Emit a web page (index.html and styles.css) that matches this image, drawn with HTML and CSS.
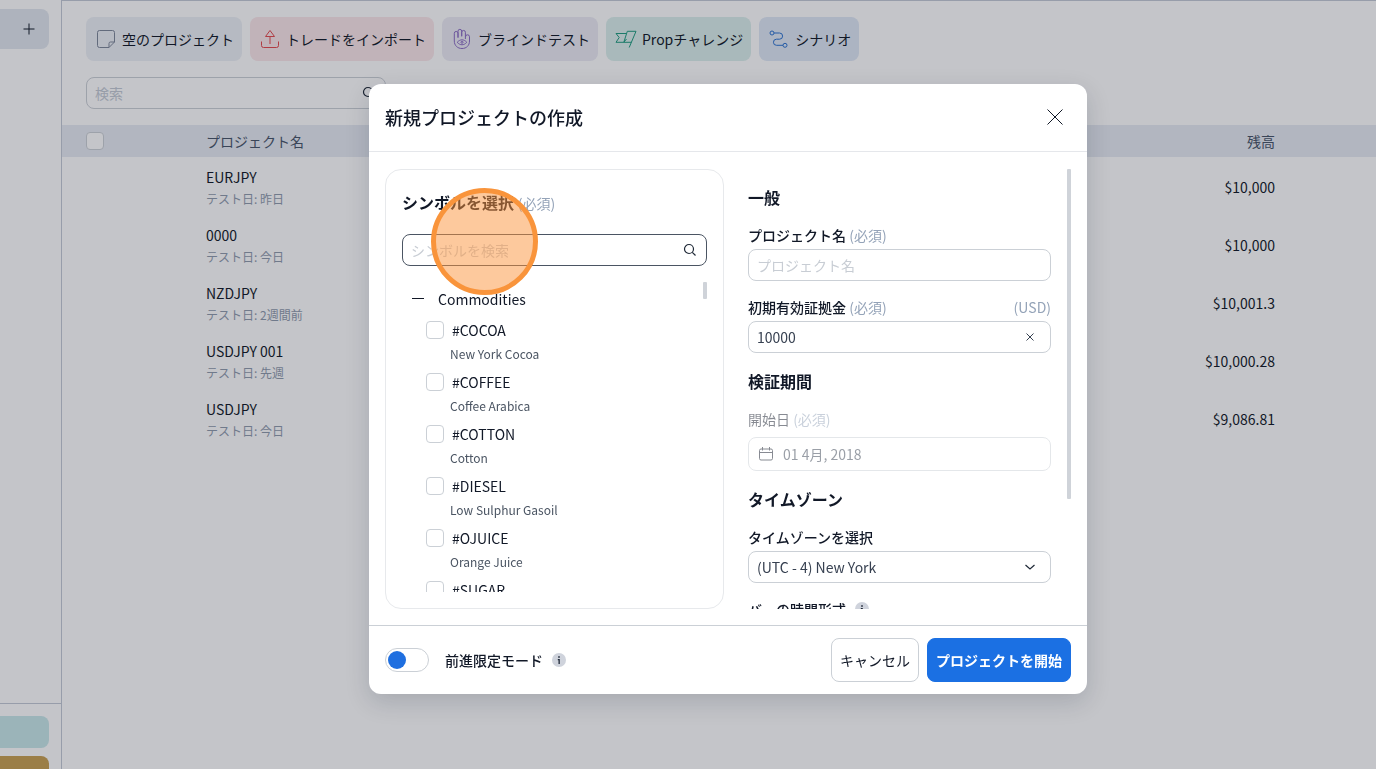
FILE: index.html
```html
<!DOCTYPE html>
<html lang="ja">
<head>
<meta charset="utf-8">
<meta name="viewport" content="width=device-width, initial-scale=1">
<title>新規プロジェクトの作成</title>
<link rel="stylesheet" href="styles.css">
</head>
<body>
<div class="app">
  <aside class="sidebar">
    <button class="sidebar-add" type="button" aria-label="追加">
      <svg width="12" height="12" viewBox="0 0 12 12"><path d="M6 .5v11M.5 6h11" stroke="currentColor" fill="none"/></svg>
    </button>
    <div class="sidebar-foot">
      <button class="foot-btn foot-teal" type="button" aria-label="サポート"></button>
      <button class="foot-btn foot-gold" type="button" aria-label="アップグレード"></button>
    </div>
  </aside>
  <main class="main">
    <div class="chips">
      <button class="chip chip-slate" type="button">
        <svg class="icon" viewBox="0 0 24 24"><path d="M5.500 3.500h13a2 2 0 0 1 2 2v9.500l-5.500 5.500h-9.500a2 2 0 0 1-2-2v-13a2 2 0 0 1 2-2zM20.500 15h-4a1.500 1.500 0 0 0-1.500 1.500v4"/></svg>空のプロジェクト</button>
      <button class="chip chip-red" type="button">
        <svg class="icon" viewBox="0 0 24 24"><path d="M3.500 14.500v4a2 2 0 0 0 2 2h13a2 2 0 0 0 2-2v-4M12 17V9.500M12 3.500l4.500 6h-9z"/></svg>トレードをインポート</button>
      <button class="chip chip-purple" type="button">
        <svg class="icon" viewBox="0 0 24 24"><path d="M8 11V4.200a1.800 1.800 0 0 1 3.700 0V9.500M11.700 9V5.300a1.800 1.800 0 0 1 3.700 0V12M8 10V6.300a1.800 1.800 0 0 0-3.700 0V14c0 4.500 3.200 7.500 7.700 7.500s7.500-3 7.500-7.500V9.800a1.800 1.800 0 0 0-4 0"/><path d="M7.200 15.300c3-3.300 6.600-3.300 9.600 0c-3 3.300-6.600 3.300-9.600 0z"/><circle cx="12" cy="15.300" r="1"/></svg>ブラインドテスト</button>
      <button class="chip chip-green" type="button">
        <svg class="icon" viewBox="0 0 24 24"><path d="M13.300 4.300H22l-6.800 16.200M13.300 4.300L9.800 15.300h7.600M12.500 6.500H2l3.200 4-3.200 4.800h7.800l2.700-3.300"/></svg>Propチャレンジ</button>
      <button class="chip chip-blue" type="button">
        <svg class="icon" viewBox="0 0 24 24"><circle cx="5" cy="6" r="2"/><circle cx="18" cy="18.300" r="2"/><path d="M7 6h5.500a3 3 0 0 1 0 6.200H9.500a3 3 0 0 0 0 6.100H16"/></svg>シナリオ</button>
    </div>
    <div class="field page-search">
      <input class="input" type="search" placeholder="検索" aria-label="検索">
      <svg class="glyph" viewBox="0 0 14 14"><circle cx="6" cy="6" r="4.500"/><path d="M9.300 9.300L12.500 12.500"/></svg>
    </div>
    <table class="projects">
      <thead>
        <tr><th class="col-check"><input class="check" type="checkbox" aria-label="すべて選択"></th><th class="col-name">プロジェクト名</th><th class="col-balance">残高</th></tr>
      </thead>
      <tbody>
        <tr><td></td><td class="col-name">EURJPY<small>テスト日: 昨日</small></td><td class="col-balance">$10,000</td></tr>
        <tr><td></td><td class="col-name">0000<small>テスト日: 今日</small></td><td class="col-balance">$10,000</td></tr>
        <tr><td></td><td class="col-name">NZDJPY<small>テスト日: 2週間前</small></td><td class="col-balance">$10,001.3</td></tr>
        <tr><td></td><td class="col-name">USDJPY 001<small>テスト日: 先週</small></td><td class="col-balance">$10,000.28</td></tr>
        <tr><td></td><td class="col-name">USDJPY<small>テスト日: 今日</small></td><td class="col-balance">$9,086.81</td></tr>
      </tbody>
    </table>
  </main>
</div>

<div class="overlay">
  <section class="modal" role="dialog" aria-modal="true" aria-labelledby="modal-title">
    <header class="modal-head">
      <h1 class="modal-title" id="modal-title">新規プロジェクトの作成</h1>
      <button class="close" type="button" aria-label="閉じる">
        <svg width="16" height="16" viewBox="0 0 16 16"><path d="M.5.500l15 15M15.500.500l-15 15" stroke="currentColor" fill="none"/></svg>
      </button>
    </header>

    <div class="modal-body">
      <div class="symbols">
        <h2 class="symbols-title"><label for="symbol-search">シンボルを選択</label> <span class="required">(必須)</span></h2>
        <div class="field field-focus">
          <input class="input" id="symbol-search" type="search" placeholder="シンボルを検索">
          <svg class="glyph" viewBox="0 0 14 14"><circle cx="6" cy="6" r="4.500"/><path d="M9.300 9.300L12.500 12.500"/></svg>
        </div>
        <div class="scroll symbols-scroll">
          <div class="scroll-view">
            <button class="group" type="button"><span class="minus"></span>Commodities</button>
            <ul class="symbol-list">
              <li class="symbol"><label class="symbol-name"><input class="check" type="checkbox">#COCOA</label><p class="symbol-sub">New York Cocoa</p></li>
              <li class="symbol"><label class="symbol-name"><input class="check" type="checkbox">#COFFEE</label><p class="symbol-sub">Coffee Arabica</p></li>
              <li class="symbol"><label class="symbol-name"><input class="check" type="checkbox">#COTTON</label><p class="symbol-sub">Cotton</p></li>
              <li class="symbol"><label class="symbol-name"><input class="check" type="checkbox">#DIESEL</label><p class="symbol-sub">Low Sulphur Gasoil</p></li>
              <li class="symbol"><label class="symbol-name"><input class="check" type="checkbox">#OJUICE</label><p class="symbol-sub">Orange Juice</p></li>
              <li class="symbol"><label class="symbol-name"><input class="check" type="checkbox">#SUGAR</label></li>
            </ul>
          </div>
          <span class="thumb thumb-short"></span>
        </div>
        <span class="pointer"></span>
      </div>

      <div class="scroll settings">
        <form class="scroll-view settings-form">
          <h2 class="section-title">一般</h2>
          <div class="row"><label class="label" for="name">プロジェクト名 <span class="required">(必須)</span></label></div>
          <div class="field"><input class="input" id="name" type="text" placeholder="プロジェクト名"></div>
          <div class="row row-next"><label class="label" for="equity">初期有効証拠金 <span class="required">(必須)</span></label><span class="required">(USD)</span></div>
          <div class="field">
            <input class="input" id="equity" type="text" value="10000">
            <button class="clear" type="button" aria-label="クリア"><svg class="glyph-box" viewBox="0 0 14 14"><path d="M3.500 3.500l7 7M10.500 3.500l-7 7"/></svg></button>
          </div>
          <h2 class="section-title section-next">検証期間</h2>
          <div class="disabled">
            <div class="row"><label class="label label-light" for="start">開始日 <span class="required">(必須)</span></label></div>
            <div class="field field-date">
              <svg class="calendar" viewBox="0 0 16 16"><path d="M3 3h10a1.500 1.500 0 0 1 1.500 1.500v8A1.500 1.500 0 0 1 13 14H3a1.500 1.500 0 0 1-1.500-1.500v-8A1.500 1.500 0 0 1 3 3zM1.500 6.500h13M4.500 1v3.500M11.500 1v3.500"/></svg>
              <input class="input" id="start" type="text" value="01 4月, 2018" disabled>
            </div>
          </div>
          <h2 class="section-title section-next">タイムゾーン</h2>
          <div class="row"><label class="label" for="tz">タイムゾーンを選択</label></div>
          <div class="field">
            <select class="input" id="tz"><option>(UTC - 4) New York</option></select>
            <svg class="glyph glyph-inset" viewBox="0 0 14 14"><path d="M2.500 5L7 9l4.500-4"/></svg>
          </div>
          <div class="row row-next row-info"><span class="label">バーの時間形式</span>
            <svg class="info" viewBox="0 0 14 14"><circle class="info-bg" cx="7" cy="7" r="7"/><path d="M6.200 3.200h1.600v1.600h-1.600zM5.800 6h2v5h-1.300v-3.800h-.7z"/></svg></div>
        </form>
        <span class="thumb thumb-long"></span>
      </div>
    </div>

    <footer class="modal-foot">
      <input class="toggle" id="forward" type="checkbox">
      <label class="label" for="forward">前進限定モード</label>
      <svg class="info info-foot" viewBox="0 0 14 14"><circle class="info-bg" cx="7" cy="7" r="7"/><path d="M6.200 3.200h1.600v1.600h-1.600zM5.800 6h2v5h-1.300v-3.800h-.7z"/></svg>
      <button class="btn" type="button">キャンセル</button>
      <button class="btn btn-primary" type="button">プロジェクトを開始</button>
    </footer>
  </section>
</div>
</body>
</html>
```

FILE: styles.css
```css
* { box-sizing: border-box; }

body {
  margin: 0;
  font: 14px/24px "Noto Sans CJK JP", "Noto Sans", sans-serif;
  color: #111827;
  background: #fff;
}

button, input, select { font: inherit; color: inherit; }
button { margin: 0; border: 0; background: none; cursor: pointer; }
h1, h2, p, ul { margin: 0; padding: 0; }
ul { list-style: none; }
svg { display: block; flex: none; fill: none; stroke: currentColor; }

/* Page behind the dialog */
.app { display: flex; height: 100vh; overflow: hidden; }

.sidebar {
  flex: 0 0 62px;
  display: flex;
  flex-direction: column;
  justify-content: space-between;
  padding-top: 9px;
  border-right: 1px solid #c3cad6;
}
.sidebar-add {
  display: flex;
  align-items: center;
  justify-content: flex-end;
  width: 49px;
  height: 40px;
  padding: 0 14px 0 0;
  border-radius: 0 8px 8px 0;
  background: #e2e7ef;
}
.sidebar-foot {
  display: flex;
  flex-direction: column;
  gap: 8px;
  height: 66px;
  padding-top: 12px;
  border-top: 1px solid #c3cad6;
  overflow: hidden;
}
.foot-btn { flex: 0 0 32px; width: 49px; padding: 0; border-radius: 0 8px 8px 0; }
.foot-teal { background: #c9e8ea; }
.foot-gold { background: #c8a052; }

.main { flex: 1; min-width: 0; border-top: 1px solid #c3cad6; padding-top: 16px; }

.chips { display: flex; gap: 8px; padding: 0 24px; }
.chip {
  display: flex;
  align-items: center;
  gap: 4px;
  height: 44px;
  padding: 0 8px;
  border-radius: 8px;
  white-space: nowrap;
}
.icon { width: 24px; height: 24px; stroke-width: 1; }
.chip-slate { background: #edf0f6; }
.chip-slate .icon { color: #7c8799; }
.chip-red { background: #fbe7ea; }
.chip-red .icon { color: #e5484d; }
.chip-purple { background: #ecebf5; }
.chip-purple .icon { color: #8b6cc4; }
.chip-green { background: #dbefec; }
.chip-green .icon { color: #1f9d80; }
.chip-blue { background: #dfe8f6; }
.chip-blue .icon { color: #2b72d0; }

.field {
  display: flex;
  align-items: center;
  height: 32px;
  padding: 0 8px;
  border: 1px solid #cbd0d6;
  border-radius: 8px;
  background: #fff;
}
.input {
  flex: 1;
  min-width: 0;
  height: 28px;
  padding: 0;
  border: 0;
  outline: 0;
  background: none;
  color: #374151;
  appearance: none;
}
.input::placeholder { color: #c8cdd4; opacity: 1; }
.glyph, .glyph-box { width: 14px; height: 14px; color: #1f2937; stroke-width: 1.200; }
.glyph { margin-right: 1px; }
.glyph-inset { margin-right: 5px; }

.page-search { width: 300px; margin: 16px 24px; }
.page-search .input::placeholder { color: #c3cad4; }

.check {
  appearance: none;
  flex: none;
  display: block;
  width: 18px;
  height: 18px;
  margin: 0;
  border: 1px solid #cbd0d6;
  border-radius: 4px;
  background: #fff;
}

.projects { width: 100%; border-collapse: collapse; }
.projects th { height: 32px; padding: 0; font-weight: 400; color: #475569; background: #e7ebf3; text-align: left; }
.projects td { height: 58px; padding: 2px 0 0; }
.projects .col-check { width: 144px; padding-left: 24px; }
.projects .col-balance { padding-right: 101px; text-align: right; }
.projects small { display: block; font-size: 12px; line-height: 20px; color: #8f9bad; }

/* Dialog */
.overlay {
  position: fixed;
  inset: 0;
  display: flex;
  align-items: center;
  justify-content: center;
  padding: 9px 0 0 80px;
  background: rgba(18, 24, 38, .25);
}
.modal {
  display: flex;
  flex-direction: column;
  width: 718px;
  max-width: 100%;
  height: calc(100vh - 159px);
  border-radius: 12px;
  background: #fff;
  box-shadow: 0 8px 24px rgba(15, 23, 42, .16);
}
.modal-head {
  display: flex;
  align-items: center;
  justify-content: space-between;
  height: 68px;
  padding: 0 24px 2px 16px;
  border-bottom: 1px solid #e5e7eb;
}
.modal-title { font-size: 18px; font-weight: 500; line-height: 28px; }
.close { display: flex; padding: 0; }

.modal-body {
  flex: 1;
  min-height: 0;
  display: grid;
  grid-template-columns: 1fr 1fr;
  gap: 8px;
  padding: 17px 16px 16px;
}
.symbols {
  position: relative;
  display: flex;
  flex-direction: column;
  min-height: 0;
  padding: 16px;
  border: 1px solid #e7e9ec;
  border-radius: 16px;
}
.symbols-title { margin-bottom: 16px; font-size: 16px; line-height: 32px; font-weight: 700; }
.symbols-title .required { line-height: 24px; }
.required { font-size: 14px; font-weight: 400; color: #94a3b8; }
.field-focus { flex: none; border-color: #4b5563; }

.scroll { display: flex; min-height: 0; }
.scroll-view { flex: 1; min-width: 0; overflow: hidden; }
.symbols-scroll { flex: 1; margin-top: 16px; }
.thumb { flex: none; width: 4px; border-radius: 1px; background: #cfd3d9; }
.thumb-short { height: 17px; }
.thumb-long { height: 75%; }

.group { display: flex; align-items: center; gap: 14px; height: 33px; padding: 0 10px; }
.minus { width: 12px; height: 1px; background: #111827; }
.symbol-list { padding-left: 24px; }
.symbol { height: 52px; }
.symbol-name { display: flex; align-items: center; gap: 8px; height: 30px; }
.symbol-sub { padding-left: 24px; font-size: 12px; line-height: 18px; color: #4b5563; }

/* Click highlight */
.pointer {
  position: absolute;
  left: 45px;
  top: 18px;
  width: 107px;
  height: 107px;
  border: 5px solid #f9943b;
  border-radius: 50%;
  background: rgba(251, 148, 60, .5);
  pointer-events: none;
}

.settings-form { padding: 16px 16px 0; }
.section-title { margin-bottom: 14px; font-size: 16px; line-height: 24px; font-weight: 700; }
.section-next { margin-top: 16px; }
.row { display: flex; justify-content: space-between; padding-bottom: 2px; }
.row-next { margin-top: 14px; }
.row-info { justify-content: flex-start; align-items: center; gap: 9px; }
.label { font-weight: 500; }
.label-light { font-weight: 400; }
.clear { display: flex; margin-right: 5px; padding: 0; }
.clear .glyph-box { stroke-width: 1; color: #374151; }
.disabled { opacity: .5; }
.field-date { height: 34px; margin-top: 4px; padding-left: 9px; gap: 9px; }
.calendar { width: 16px; height: 16px; }

.info { width: 14px; height: 14px; fill: #1f2937; stroke: none; }
.info-bg { fill: #cfd3dc; }

.modal-foot {
  display: flex;
  align-items: center;
  height: 69px;
  padding: 0 16px;
  border-top: 1px solid #cbd0d6;
}
.toggle {
  appearance: none;
  display: flex;
  align-items: center;
  width: 44px;
  height: 24px;
  margin: 0 16px 0 0;
  padding: 2px;
  border: 1px solid #cbd0d6;
  border-radius: 12px;
}
.toggle::before { content: ""; width: 18px; height: 18px; border-radius: 50%; background: #1f6fe0; }
.toggle:checked { justify-content: flex-end; }
.info-foot { margin: 0 auto 0 9px; }
.btn { height: 44px; padding: 0 8px; border: 1px solid #cbd0d6; border-radius: 8px; white-space: nowrap; }
.btn-primary { margin-left: 8px; border-color: #1b70e3; background: #1b70e3; color: #fff; font-weight: 700; }
```
